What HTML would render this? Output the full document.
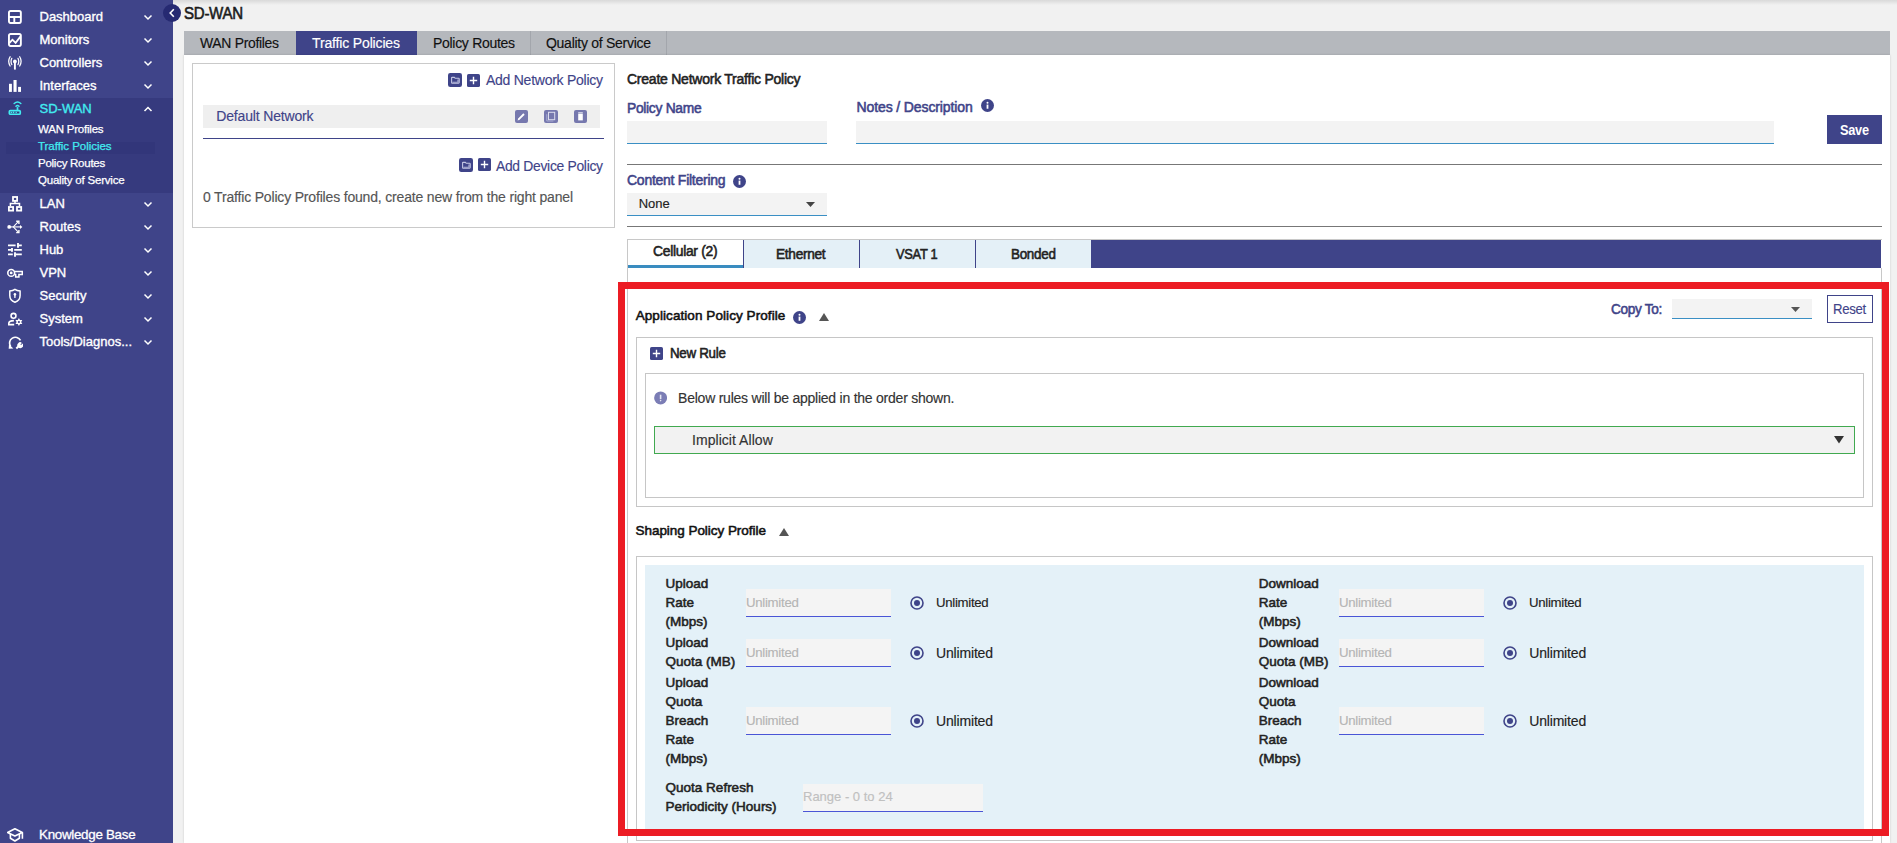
<!DOCTYPE html>
<html><head><meta charset="utf-8">
<style>
*{box-sizing:border-box;margin:0;padding:0}
html,body{width:1897px;height:843px;overflow:hidden;background:#f1f1f1;font-family:"Liberation Sans",sans-serif;color:#222;position:relative}
.a{position:absolute}
.t{position:absolute;white-space:nowrap}
</style></head><body>
<div class="a" style="left:0px;top:0px;width:173px;height:843px;background:#3f4489"></div>
<div class="a" style="left:0px;top:98px;width:173px;height:95px;background:#363a7e"></div>
<div class="a" style="left:6px;top:142px;width:149px;height:12px;background:#32367a"></div>
<div class="t" style="left:39.50px;top:10.20px;font-size:13px;line-height:13px;color:#fff;letter-spacing:0.000px;-webkit-text-stroke:0.35px currentColor;">Dashboard</div>
<svg class="a" style="left:143px;top:14px" width="10" height="7" viewBox="0 0 10 7"><path d="M1.5 1.5l3.5 3.5 3.5-3.5" fill="none" stroke="#fff" stroke-width="1.5"/></svg>
<div class="t" style="left:39.50px;top:33.20px;font-size:13px;line-height:13px;color:#fff;letter-spacing:0.000px;-webkit-text-stroke:0.35px currentColor;">Monitors</div>
<svg class="a" style="left:143px;top:37px" width="10" height="7" viewBox="0 0 10 7"><path d="M1.5 1.5l3.5 3.5 3.5-3.5" fill="none" stroke="#fff" stroke-width="1.5"/></svg>
<div class="t" style="left:39.50px;top:56.20px;font-size:13px;line-height:13px;color:#fff;letter-spacing:0.000px;-webkit-text-stroke:0.35px currentColor;">Controllers</div>
<svg class="a" style="left:143px;top:60px" width="10" height="7" viewBox="0 0 10 7"><path d="M1.5 1.5l3.5 3.5 3.5-3.5" fill="none" stroke="#fff" stroke-width="1.5"/></svg>
<div class="t" style="left:39.50px;top:79.20px;font-size:13px;line-height:13px;color:#fff;letter-spacing:0.000px;-webkit-text-stroke:0.35px currentColor;">Interfaces</div>
<svg class="a" style="left:143px;top:83px" width="10" height="7" viewBox="0 0 10 7"><path d="M1.5 1.5l3.5 3.5 3.5-3.5" fill="none" stroke="#fff" stroke-width="1.5"/></svg>
<div class="t" style="left:39.50px;top:102.20px;font-size:13px;line-height:13px;color:#42ecf0;letter-spacing:0.000px;-webkit-text-stroke:0.35px currentColor;">SD-WAN</div>
<svg class="a" style="left:143px;top:106px" width="10" height="7" viewBox="0 0 10 7"><path d="M1.5 5l3.5-3.5 3.5 3.5" fill="none" stroke="#fff" stroke-width="1.5"/></svg>
<div class="t" style="left:39.50px;top:197.30px;font-size:13px;line-height:13px;color:#fff;letter-spacing:0.000px;-webkit-text-stroke:0.35px currentColor;">LAN</div>
<svg class="a" style="left:143px;top:201px" width="10" height="7" viewBox="0 0 10 7"><path d="M1.5 1.5l3.5 3.5 3.5-3.5" fill="none" stroke="#fff" stroke-width="1.5"/></svg>
<div class="t" style="left:39.50px;top:220.30px;font-size:13px;line-height:13px;color:#fff;letter-spacing:0.000px;-webkit-text-stroke:0.35px currentColor;">Routes</div>
<svg class="a" style="left:143px;top:224px" width="10" height="7" viewBox="0 0 10 7"><path d="M1.5 1.5l3.5 3.5 3.5-3.5" fill="none" stroke="#fff" stroke-width="1.5"/></svg>
<div class="t" style="left:39.50px;top:243.30px;font-size:13px;line-height:13px;color:#fff;letter-spacing:0.000px;-webkit-text-stroke:0.35px currentColor;">Hub</div>
<svg class="a" style="left:143px;top:247px" width="10" height="7" viewBox="0 0 10 7"><path d="M1.5 1.5l3.5 3.5 3.5-3.5" fill="none" stroke="#fff" stroke-width="1.5"/></svg>
<div class="t" style="left:39.50px;top:266.30px;font-size:13px;line-height:13px;color:#fff;letter-spacing:0.000px;-webkit-text-stroke:0.35px currentColor;">VPN</div>
<svg class="a" style="left:143px;top:270px" width="10" height="7" viewBox="0 0 10 7"><path d="M1.5 1.5l3.5 3.5 3.5-3.5" fill="none" stroke="#fff" stroke-width="1.5"/></svg>
<div class="t" style="left:39.50px;top:289.30px;font-size:13px;line-height:13px;color:#fff;letter-spacing:0.000px;-webkit-text-stroke:0.35px currentColor;">Security</div>
<svg class="a" style="left:143px;top:293px" width="10" height="7" viewBox="0 0 10 7"><path d="M1.5 1.5l3.5 3.5 3.5-3.5" fill="none" stroke="#fff" stroke-width="1.5"/></svg>
<div class="t" style="left:39.50px;top:312.30px;font-size:13px;line-height:13px;color:#fff;letter-spacing:0.000px;-webkit-text-stroke:0.35px currentColor;">System</div>
<svg class="a" style="left:143px;top:316px" width="10" height="7" viewBox="0 0 10 7"><path d="M1.5 1.5l3.5 3.5 3.5-3.5" fill="none" stroke="#fff" stroke-width="1.5"/></svg>
<div class="t" style="left:39.50px;top:335.30px;font-size:13px;line-height:13px;color:#fff;letter-spacing:0.000px;-webkit-text-stroke:0.35px currentColor;">Tools/Diagnos...</div>
<svg class="a" style="left:143px;top:339px" width="10" height="7" viewBox="0 0 10 7"><path d="M1.5 1.5l3.5 3.5 3.5-3.5" fill="none" stroke="#fff" stroke-width="1.5"/></svg>
<svg class="a" style="left:7px;top:9px" width="16" height="16" viewBox="0 0 16 16"><g fill="none" stroke="#fff" stroke-width="1.9"><rect x="1.95" y="1.95" width="11.9" height="12" rx="1.6"/><path d="M2 8H13.9M7.3 8V14"/></g></svg>
<svg class="a" style="left:7px;top:32px" width="16" height="16" viewBox="0 0 16 16"><g fill="none" stroke="#fff" stroke-width="1.9"><rect x="1.95" y="1.95" width="11.9" height="12" rx="1.6"/><path d="M2.3 11l3.2-3.3 3.1 3.1 5-6.4" stroke-width="1.8"/></g></svg>
<svg class="a" style="left:7px;top:55px" width="16" height="16" viewBox="0 0 16 16"><g fill="none" stroke="#fff" stroke-width="1.25" stroke-linecap="round"><path d="M4.8 3.3Q3.3 6.4 4.8 9.6M3.1 1.7Q0.3 6.3 3.1 11M11 3.3Q12.5 6.4 11 9.6M12.7 1.7Q15.5 6.3 12.7 11"/><circle cx="7.9" cy="6.5" r="1.9" fill="#fff" stroke="none"/><path d="M7.9 7V14.6" stroke-width="1.9" stroke-linecap="butt"/></g></svg>
<svg class="a" style="left:7px;top:78px" width="16" height="16" viewBox="0 0 16 16"><g fill="#fff"><rect x="2" y="5.8" width="2.9" height="8.1"/><rect x="6.5" y="2" width="3.1" height="11.9"/><rect x="11.1" y="8.9" width="2.9" height="5"/></g></svg>
<svg class="a" style="left:7px;top:101px" width="16" height="16" viewBox="0 0 16 16"><g fill="none" stroke="#42ecf0" stroke-width="1.7"><rect x="2.35" y="9.55" width="10.9" height="3.7" rx="1"/><path d="M10.5 6.1V9"/><path d="M9 5.2Q10.5 3.6 12 5.2M7.2 2.5Q10.5 -0.4 13.8 2.5" stroke-width="1.5" stroke-linecap="round"/></g><g fill="#42ecf0"><circle cx="4.4" cy="11.4" r="0.75"/><circle cx="6.5" cy="11.4" r="0.8"/><circle cx="9.2" cy="11.4" r="0.75"/></g></svg>
<svg class="a" style="left:7px;top:196px" width="16" height="16" viewBox="0 0 16 16"><g fill="none" stroke="#fff" stroke-width="1.8"><rect x="6" y="1" width="4.1" height="3.9"/><rect x="1.9" y="11" width="4.2" height="3.6"/><rect x="10" y="11" width="4.2" height="3.6"/><path d="M8 4.9V7.6M3.4 10.1V7.6H12.5V10.1" stroke-width="1.5"/></g></svg>
<svg class="a" style="left:7px;top:219px" width="16" height="16" viewBox="0 0 16 16"><g fill="#fff" stroke="#fff"><circle cx="2.2" cy="7.9" r="1.9" stroke="none"/><path d="M2.2 7.9H13.6" stroke-width="1.3" fill="none" stroke-opacity="0.85"/><path d="M15.4 7.9L13 5.9V9.9z" stroke="none"/><path d="M6.3 7.9L11.3 2.7M6.3 7.9L11.3 13.1" stroke-width="1.1" fill="none"/><path d="M9.2 2.2H11.9V4.9M9.2 13.6H11.9V10.9" stroke-width="1.4" fill="none"/></g></svg>
<svg class="a" style="left:7px;top:242px" width="16" height="16" viewBox="0 0 16 16"><g fill="none" stroke="#fff" stroke-width="1.7"><path d="M1 3.4H8.6M12 3.4H14.8M1 7.9H4.1M7.2 7.9H14.8M1 12.4H5.8M8.9 12.4H14.8"/><path d="M11 1V5.8M5 6V9.8M8 10.3V14.8" stroke-width="1.9"/></g></svg>
<svg class="a" style="left:7px;top:265px" width="16" height="16" viewBox="0 0 16 16"><g fill="none" stroke="#fff" stroke-width="1.6"><circle cx="4.2" cy="7.9" r="3.4"/><path d="M7.6 6.4H15.3V9.5H11.9V12H8.7V9.5H7.4" stroke-width="1.5"/></g><circle cx="4.2" cy="7.9" r="1.4" fill="#fff"/></svg>
<svg class="a" style="left:7px;top:288px" width="16" height="16" viewBox="0 0 16 16"><g fill="none" stroke="#fff" stroke-width="1.5"><path d="M7.95 1.3C9.5 2.4 11.4 2.9 13.1 3.1V7.6C13.1 11 11 13.3 7.95 14.3C4.9 13.3 2.8 11 2.8 7.6V3.1C4.5 2.9 6.4 2.4 7.95 1.3z"/></g><g fill="#fff"><circle cx="7.9" cy="6.3" r="1.25"/><path d="M7.1 6.5H8.7L8.5 9.9H7.3z"/></g></svg>
<svg class="a" style="left:7px;top:311px" width="16" height="16" viewBox="0 0 16 16"><g fill="none" stroke="#fff" stroke-width="1.6"><circle cx="6.5" cy="4.8" r="2.45"/><path d="M7.2 13.6H1.8V12.3C1.8 10.8 3.6 9.8 6.9 9.6"/></g><path d="M11.9 7.1L13 9.1 15.3 9.1 14.2 11 15.3 12.9 13 12.9 11.9 14.9 10.8 12.9 8.5 12.9 9.6 11 8.5 9.1 10.8 9.1z" fill="#fff"/><circle cx="11.9" cy="11" r="1.1" fill="#3f4489"/></svg>
<svg class="a" style="left:7px;top:334px" width="16" height="16" viewBox="0 0 16 16"><g fill="none" stroke="#fff" stroke-width="1.7"><path d="M3.6 12.4A5.8 5.8 0 1 1 13.5 6.4"/></g><path d="M1.7 14.8L2 10.3 6.3 14.5z" fill="#fff"/><g fill="#fff"><path d="M8.6 13.8L11.6 10.8 13 12.2 10 15.2z"/><path d="M11.2 9.2A2.6 2.6 0 0 1 14.9 8.9L13.4 10.4 14.1 11.1 15.6 9.6A2.6 2.6 0 0 1 15.3 13.3 2.6 2.6 0 0 1 11.2 9.2z"/></g></svg>
<div class="t" style="left:38.00px;top:123.57px;font-size:11.5px;line-height:11.5px;color:#fff;letter-spacing:-0.213px;-webkit-text-stroke:0.25px currentColor;">WAN Profiles</div>
<div class="t" style="left:38.00px;top:140.57px;font-size:11.5px;line-height:11.5px;color:#42ecf0;letter-spacing:-0.035px;-webkit-text-stroke:0.25px currentColor;">Traffic Policies</div>
<div class="t" style="left:38.00px;top:157.57px;font-size:11.5px;line-height:11.5px;color:#fff;letter-spacing:-0.259px;-webkit-text-stroke:0.25px currentColor;">Policy Routes</div>
<div class="t" style="left:38.00px;top:174.57px;font-size:11.5px;line-height:11.5px;color:#fff;letter-spacing:-0.207px;-webkit-text-stroke:0.25px currentColor;">Quality of Service</div>
<div class="t" style="left:39.30px;top:827.87px;font-size:13.5px;line-height:13.5px;color:#fff;letter-spacing:-0.300px;-webkit-text-stroke:0.3px currentColor;transform:scaleX(0.9916);transform-origin:0 0;">Knowledge Base</div>
<svg class="a" style="left:7px;top:827px" width="17" height="16" viewBox="0 0 17 16"><g fill="none" stroke="#fff" stroke-width="1.6" stroke-linejoin="round"><path d="M0.6 5.5L7.9 1.8 15.3 5.5 7.9 8.9z"/><path d="M3.4 7.1V11.3L7.9 14 12.4 11.3V7.1M15.4 5.6V11.8"/></g></svg>
<div class="a" style="left:173px;top:0px;width:1724px;height:5px;background:linear-gradient(#d9d9d9,#f1f1f1)"></div>
<div class="a" style="left:163px;top:4px;width:18px;height:18px;border-radius:50%;background:#262a72"></div>
<svg class="a" style="left:168px;top:8px" width="8" height="10" viewBox="0 0 8 10"><path d="M5.8 1.2L2.2 5l3.6 3.8" fill="none" stroke="#fff" stroke-width="1.6"/></svg>
<div class="t" style="left:184.00px;top:5.11px;font-size:17px;line-height:17px;color:#1c1c1c;letter-spacing:-0.300px;-webkit-text-stroke:0.6px currentColor;transform:scaleX(0.8853);transform-origin:0 0;">SD-WAN</div>
<div class="a" style="left:184px;top:31px;width:1706px;height:24px;background:#b5b8bd"></div>
<div class="a" style="left:296px;top:31px;width:121px;height:24px;background:#3f4489"></div>
<div class="a" style="left:530px;top:31px;width:1px;height:24px;background:#a3a6ac"></div>
<div class="a" style="left:666px;top:31px;width:1px;height:24px;background:#a3a6ac"></div>
<div class="t" style="left:200.30px;top:36.15px;font-size:14px;line-height:14px;color:#111;letter-spacing:-0.300px;-webkit-text-stroke:0.15px currentColor;transform:scaleX(0.9948);transform-origin:0 0;">WAN Profiles</div>
<div class="t" style="left:312.00px;top:36.15px;font-size:14px;line-height:14px;color:#fff;letter-spacing:-0.150px;-webkit-text-stroke:0.15px currentColor;">Traffic Policies</div>
<div class="t" style="left:433.00px;top:36.15px;font-size:14px;line-height:14px;color:#111;letter-spacing:-0.300px;-webkit-text-stroke:0.15px currentColor;">Policy Routes</div>
<div class="t" style="left:546.00px;top:36.15px;font-size:14px;line-height:14px;color:#111;letter-spacing:-0.277px;-webkit-text-stroke:0.15px currentColor;">Quality of Service</div>
<div class="a" style="left:184px;top:55px;width:1706px;height:788px;background:#fff;box-shadow:0 0 2px rgba(0,0,0,0.16)"></div>
<div class="a" style="left:192px;top:63px;width:423px;height:165px;border:1px solid #cacaca"></div>
<svg class="a" style="left:448px;top:73px" width="14" height="14" viewBox="0 0 14 14"><rect width="14" height="14" rx="2.2" fill="#3f4489"/><g transform="translate(0,-0.7)"><path d="M3.6 4.9V10.4Q3.6 10.9 4.1 10.9H10.6Q11.2 10.9 11.2 10.3V6.6Q11.2 6 10.6 6H7.2L6.4 5.1H4.1Q3.6 5.1 3.6 5.6" fill="none" stroke="#c3c5e2" stroke-width="1.1"/><path d="M9.4 7.1H10.7V10.4H4.4V9.4H9.4z" fill="#aeb1d6"/></g></svg>
<svg class="a" style="left:467px;top:74px" width="13" height="13" viewBox="0 0 13 13"><rect width="13" height="13" rx="1.6" fill="#3f4489"/><path d="M6.5 2.8v7.4M2.8 6.5h7.4" stroke="#fff" stroke-width="1.4"/></svg>
<div class="t" style="left:486.00px;top:72.85px;font-size:14px;line-height:14px;color:#3f4489;letter-spacing:-0.258px;-webkit-text-stroke:0.15px currentColor;">Add Network Policy</div>
<div class="a" style="left:203px;top:105px;width:397px;height:23px;background:#efefef"></div>
<div class="t" style="left:216.30px;top:108.65px;font-size:14px;line-height:14px;color:#3f4489;letter-spacing:-0.166px;-webkit-text-stroke:0.15px currentColor;">Default Network</div>
<svg class="a" style="left:515px;top:110px" width="13" height="13" viewBox="0 0 13 13"><rect width="13" height="13" rx="2" fill="#7678ae"/><path d="M3.6 9.4l5.4-5.4" stroke="#fff" stroke-width="1.9"/><path d="M2.6 10.4l.6-2 1.4 1.4z" fill="#fff"/></svg>
<svg class="a" style="left:544px;top:110px" width="14" height="13" viewBox="0 0 14 13"><rect width="14" height="13" rx="2" fill="#7678ae"/><rect x="4.5" y="2.3" width="6.2" height="7.4" fill="none" stroke="#dcdded" stroke-width="1"/><path d="M2.8 4.2v6.8h6.6" fill="none" stroke="#a9abd2" stroke-width="1"/></svg>
<svg class="a" style="left:574px;top:110px" width="13" height="13" viewBox="0 0 13 13"><rect width="13" height="13" rx="2" fill="#7678ae"/><rect x="4.2" y="3.6" width="4.6" height="6.8" fill="#fff"/><rect x="4.2" y="2.2" width="4.6" height="1" fill="#dfe0ee"/></svg>
<div class="a" style="left:203px;top:138px;width:401px;height:1px;background:#3f4489"></div>
<svg class="a" style="left:459px;top:158px" width="14" height="14" viewBox="0 0 14 14"><rect width="14" height="14" rx="2.2" fill="#3f4489"/><g transform="translate(0,-0.7)"><path d="M3.6 4.9V10.4Q3.6 10.9 4.1 10.9H10.6Q11.2 10.9 11.2 10.3V6.6Q11.2 6 10.6 6H7.2L6.4 5.1H4.1Q3.6 5.1 3.6 5.6" fill="none" stroke="#c3c5e2" stroke-width="1.1"/><path d="M9.4 7.1H10.7V10.4H4.4V9.4H9.4z" fill="#aeb1d6"/></g></svg>
<svg class="a" style="left:478px;top:158px" width="13" height="13" viewBox="0 0 13 13"><rect width="13" height="13" rx="1.6" fill="#3f4489"/><path d="M6.5 2.8v7.4M2.8 6.5h7.4" stroke="#fff" stroke-width="1.4"/></svg>
<div class="t" style="left:496.00px;top:158.95px;font-size:14px;line-height:14px;color:#3f4489;letter-spacing:-0.300px;-webkit-text-stroke:0.15px currentColor;transform:scaleX(0.9905);transform-origin:0 0;">Add Device Policy</div>
<div class="t" style="left:203.00px;top:190.25px;font-size:14px;line-height:14px;color:#555;letter-spacing:-0.175px;-webkit-text-stroke:0.15px currentColor;">0 Traffic Policy Profiles found, create new from the right panel</div>
<div class="t" style="left:627.00px;top:71.95px;font-size:14px;line-height:14px;color:#222;letter-spacing:-0.238px;-webkit-text-stroke:0.55px currentColor;">Create Network Traffic Policy</div>
<div class="t" style="left:627.00px;top:100.95px;font-size:14px;line-height:14px;color:#3f4489;letter-spacing:-0.300px;-webkit-text-stroke:0.55px currentColor;transform:scaleX(0.9871);transform-origin:0 0;">Policy Name</div>
<div class="t" style="left:856.60px;top:100.45px;font-size:14px;line-height:14px;color:#3f4489;letter-spacing:-0.121px;-webkit-text-stroke:0.55px currentColor;">Notes / Description</div>
<svg class="a" style="left:981px;top:99px" width="13" height="13" viewBox="0 0 13 13"><circle cx="6.5" cy="6.5" r="6.5" fill="#3f4489"/><rect x="5.6" y="5.59" width="1.8" height="4.16" fill="#fff"/><circle cx="6.5" cy="3.6400000000000006" r="1" fill="#fff"/></svg>
<div class="a" style="left:627px;top:121px;width:200px;height:23px;background:#f3f3f3;border-bottom:1px solid #3a8fc4"></div>
<div class="a" style="left:856px;top:121px;width:918px;height:23px;background:#f3f3f3;border-bottom:1px solid #3a8fc4"></div>
<div class="a" style="left:1827px;top:115px;width:55px;height:29px;background:#3f4489"></div>
<div class="t" style="left:1840.00px;top:123.05px;font-size:14px;line-height:14px;color:#fff;letter-spacing:-0.300px;font-weight:bold;transform:scaleX(0.9122);transform-origin:0 0;">Save</div>
<div class="a" style="left:627px;top:164px;width:1255px;height:1px;background:#777"></div>
<div class="t" style="left:627.00px;top:172.85px;font-size:14px;line-height:14px;color:#3f4489;letter-spacing:-0.257px;-webkit-text-stroke:0.55px currentColor;">Content Filtering</div>
<svg class="a" style="left:733px;top:175px" width="13" height="13" viewBox="0 0 13 13"><circle cx="6.5" cy="6.5" r="6.5" fill="#3f4489"/><rect x="5.6" y="5.59" width="1.8" height="4.16" fill="#fff"/><circle cx="6.5" cy="3.6400000000000006" r="1" fill="#fff"/></svg>
<div class="a" style="left:627px;top:193px;width:200px;height:23px;background:#f3f3f3;border-bottom:1px solid #3a8fc4"></div>
<div class="t" style="left:638.70px;top:196.80px;font-size:13px;line-height:13px;color:#222;letter-spacing:0.000px;-webkit-text-stroke:0.15px currentColor;">None</div>
<svg class="a" style="left:806px;top:202px" width="9" height="6" viewBox="0 0 9 6"><path d="M0 0h9L4.5 5z" fill="#444"/></svg>
<div class="a" style="left:627px;top:226px;width:1255px;height:1px;background:#777"></div>
<div class="a" style="left:627px;top:239px;width:1255px;height:1px;background:#c8c8c8"></div>
<div class="a" style="left:627px;top:239px;width:1px;height:604px;background:#c8c8c8"></div>
<div class="a" style="left:1881px;top:268px;width:1px;height:575px;background:#c8c8c8"></div>
<div class="a" style="left:628px;top:240px;width:116px;height:28px;background:#fff"></div>
<div class="a" style="left:628px;top:265px;width:116px;height:3px;background:#3a8cc0"></div>
<div class="a" style="left:744px;top:240px;width:115px;height:28px;background:#e4f0f7"></div>
<div class="a" style="left:860px;top:240px;width:115px;height:28px;background:#e4f0f7"></div>
<div class="a" style="left:976px;top:240px;width:115px;height:28px;background:#e4f0f7"></div>
<div class="a" style="left:743px;top:240px;width:1px;height:28px;background:#3f4489"></div>
<div class="a" style="left:859px;top:240px;width:1px;height:28px;background:#3f4489"></div>
<div class="a" style="left:975px;top:240px;width:1px;height:28px;background:#3f4489"></div>
<div class="a" style="left:1091px;top:240px;width:790px;height:28px;background:#3f4489"></div>
<div class="t" style="left:652.60px;top:244.05px;font-size:14px;line-height:14px;color:#222;letter-spacing:-0.300px;-webkit-text-stroke:0.55px currentColor;transform:scaleX(0.9915);transform-origin:0 0;">Cellular (2)</div>
<div class="t" style="left:776.40px;top:246.65px;font-size:14px;line-height:14px;color:#222;letter-spacing:-0.300px;-webkit-text-stroke:0.55px currentColor;transform:scaleX(0.9762);transform-origin:0 0;">Ethernet</div>
<div class="t" style="left:896.00px;top:246.75px;font-size:14px;line-height:14px;color:#222;letter-spacing:-0.300px;-webkit-text-stroke:0.55px currentColor;transform:scaleX(0.9159);transform-origin:0 0;">VSAT 1</div>
<div class="t" style="left:1010.70px;top:246.75px;font-size:14px;line-height:14px;color:#222;letter-spacing:-0.300px;-webkit-text-stroke:0.55px currentColor;transform:scaleX(0.9603);transform-origin:0 0;">Bonded</div>
<div class="t" style="left:635.70px;top:308.57px;font-size:13.5px;line-height:13.5px;color:#111;letter-spacing:0.071px;-webkit-text-stroke:0.55px currentColor;">Application Policy Profile</div>
<svg class="a" style="left:793px;top:311px" width="13" height="13" viewBox="0 0 13 13"><circle cx="6.5" cy="6.5" r="6.5" fill="#3f4489"/><rect x="5.6" y="5.59" width="1.8" height="4.16" fill="#fff"/><circle cx="6.5" cy="3.6400000000000006" r="1" fill="#fff"/></svg>
<svg class="a" style="left:819px;top:313px" width="10" height="8" viewBox="0 0 10 8"><path d="M5 0L10 8H0z" fill="#555"/></svg>
<div class="t" style="left:1611.00px;top:302.45px;font-size:14px;line-height:14px;color:#3f4489;letter-spacing:-0.300px;-webkit-text-stroke:0.55px currentColor;transform:scaleX(0.9701);transform-origin:0 0;">Copy To:</div>
<div class="a" style="left:1672px;top:299px;width:140px;height:20px;background:#f3f3f3;border-bottom:1px solid #3a8fc4"></div>
<svg class="a" style="left:1791px;top:307px" width="9" height="6" viewBox="0 0 9 6"><path d="M0 0h9L4.5 5z" fill="#555"/></svg>
<div class="a" style="left:1827px;top:295px;width:46px;height:28px;border:1px solid #3f4489"></div>
<div class="t" style="left:1833.40px;top:302.15px;font-size:14px;line-height:14px;color:#3f4489;letter-spacing:-0.300px;-webkit-text-stroke:0.15px currentColor;transform:scaleX(0.9387);transform-origin:0 0;">Reset</div>
<div class="a" style="left:636px;top:337px;width:1237px;height:170px;border:1px solid #c6c6c6"></div>
<svg class="a" style="left:650px;top:347px" width="13" height="13" viewBox="0 0 13 13"><rect width="13" height="13" rx="1.6" fill="#3f4489"/><path d="M6.5 2.8v7.4M2.8 6.5h7.4" stroke="#fff" stroke-width="1.4"/></svg>
<div class="t" style="left:670.00px;top:346.45px;font-size:14px;line-height:14px;color:#222;letter-spacing:-0.300px;-webkit-text-stroke:0.55px currentColor;transform:scaleX(0.9527);transform-origin:0 0;">New Rule</div>
<div class="a" style="left:645px;top:373px;width:1219px;height:125px;border:1px solid #c6c6c6"></div>
<svg class="a" style="left:654px;top:391px" width="13" height="14" viewBox="0 0 13 14"><circle cx="6.6" cy="6.9" r="6.5" fill="#7b7db5"/><rect x="5.8" y="3.7" width="1.6" height="4.4" fill="#fff" opacity="0.8"/><circle cx="6.6" cy="9.6" r="0.8" fill="#fff" opacity="0.8"/></svg>
<div class="t" style="left:678.10px;top:390.85px;font-size:14px;line-height:14px;color:#333;letter-spacing:-0.236px;-webkit-text-stroke:0.15px currentColor;">Below rules will be applied in the order shown.</div>
<div class="a" style="left:654px;top:426px;width:1201px;height:28px;background:#f2f2f2;border:1px solid #41a950"></div>
<div class="t" style="left:692.00px;top:433.05px;font-size:14px;line-height:14px;color:#333;letter-spacing:0.048px;-webkit-text-stroke:0.15px currentColor;">Implicit Allow</div>
<svg class="a" style="left:1834px;top:436px" width="10" height="8" viewBox="0 0 10 8"><path d="M0 0h10L5 7.5z" fill="#333"/></svg>
<div class="t" style="left:635.50px;top:523.97px;font-size:13.5px;line-height:13.5px;color:#111;letter-spacing:-0.044px;-webkit-text-stroke:0.55px currentColor;">Shaping Policy Profile</div>
<svg class="a" style="left:779px;top:528px" width="10" height="8" viewBox="0 0 10 8"><path d="M5 0L10 8H0z" fill="#555"/></svg>
<div class="a" style="left:636px;top:556px;width:1237px;height:285px;border:1px solid #c6c6c6"></div>
<div class="a" style="left:645px;top:565px;width:1219px;height:268px;background:#e4f1f8"></div>
<div class="t" style="left:665.60px;top:577.47px;font-size:13.5px;line-height:13.5px;color:#222;letter-spacing:0.000px;-webkit-text-stroke:0.55px currentColor;">Upload</div>
<div class="t" style="left:665.60px;top:596.47px;font-size:13.5px;line-height:13.5px;color:#222;letter-spacing:0.000px;-webkit-text-stroke:0.55px currentColor;">Rate</div>
<div class="t" style="left:665.60px;top:615.47px;font-size:13.5px;line-height:13.5px;color:#222;letter-spacing:0.000px;-webkit-text-stroke:0.55px currentColor;">(Mbps)</div>
<div class="a" style="left:746px;top:589px;width:145px;height:28px;background:#f4f4f4;border-bottom:1px solid #4a55d6"></div>
<div class="t" style="left:746.00px;top:596.27px;font-size:13.5px;line-height:13.5px;color:#b5b5b5;letter-spacing:-0.300px;-webkit-text-stroke:0.15px currentColor;transform:scaleX(0.9802);transform-origin:0 0;">Unlimited</div>
<svg class="a" style="left:910px;top:596px" width="14" height="14" viewBox="0 0 14 14"><circle cx="7" cy="7" r="6" fill="none" stroke="#3f4489" stroke-width="1.6"/><circle cx="7" cy="7" r="3" fill="#3f4489"/></svg>
<div class="t" style="left:936.00px;top:596.07px;font-size:13.5px;line-height:13.5px;color:#222;letter-spacing:-0.300px;-webkit-text-stroke:0.15px currentColor;transform:scaleX(0.9783);transform-origin:0 0;">Unlimited</div>
<div class="t" style="left:665.60px;top:636.27px;font-size:13.5px;line-height:13.5px;color:#222;letter-spacing:0.000px;-webkit-text-stroke:0.55px currentColor;">Upload</div>
<div class="t" style="left:665.60px;top:655.27px;font-size:13.5px;line-height:13.5px;color:#222;letter-spacing:0.000px;-webkit-text-stroke:0.55px currentColor;">Quota (MB)</div>
<div class="a" style="left:746px;top:639px;width:145px;height:28px;background:#f4f4f4;border-bottom:1px solid #4a55d6"></div>
<div class="t" style="left:746.00px;top:645.77px;font-size:13.5px;line-height:13.5px;color:#b5b5b5;letter-spacing:-0.300px;-webkit-text-stroke:0.15px currentColor;transform:scaleX(0.9802);transform-origin:0 0;">Unlimited</div>
<svg class="a" style="left:910px;top:646px" width="14" height="14" viewBox="0 0 14 14"><circle cx="7" cy="7" r="6" fill="none" stroke="#3f4489" stroke-width="1.6"/><circle cx="7" cy="7" r="3" fill="#3f4489"/></svg>
<div class="t" style="left:936.00px;top:646.05px;font-size:14px;line-height:14px;color:#222;letter-spacing:-0.169px;-webkit-text-stroke:0.15px currentColor;">Unlimited</div>
<div class="t" style="left:665.60px;top:676.17px;font-size:13.5px;line-height:13.5px;color:#222;letter-spacing:0.000px;-webkit-text-stroke:0.55px currentColor;">Upload</div>
<div class="t" style="left:665.60px;top:695.07px;font-size:13.5px;line-height:13.5px;color:#222;letter-spacing:0.000px;-webkit-text-stroke:0.55px currentColor;">Quota</div>
<div class="t" style="left:665.60px;top:714.07px;font-size:13.5px;line-height:13.5px;color:#222;letter-spacing:0.000px;-webkit-text-stroke:0.55px currentColor;">Breach</div>
<div class="t" style="left:665.60px;top:733.07px;font-size:13.5px;line-height:13.5px;color:#222;letter-spacing:0.000px;-webkit-text-stroke:0.55px currentColor;">Rate</div>
<div class="t" style="left:665.60px;top:752.07px;font-size:13.5px;line-height:13.5px;color:#222;letter-spacing:0.000px;-webkit-text-stroke:0.55px currentColor;">(Mbps)</div>
<div class="a" style="left:746px;top:707px;width:145px;height:28px;background:#f4f4f4;border-bottom:1px solid #4a55d6"></div>
<div class="t" style="left:746.00px;top:714.07px;font-size:13.5px;line-height:13.5px;color:#b5b5b5;letter-spacing:-0.300px;-webkit-text-stroke:0.15px currentColor;transform:scaleX(0.9802);transform-origin:0 0;">Unlimited</div>
<svg class="a" style="left:910px;top:714px" width="14" height="14" viewBox="0 0 14 14"><circle cx="7" cy="7" r="6" fill="none" stroke="#3f4489" stroke-width="1.6"/><circle cx="7" cy="7" r="3" fill="#3f4489"/></svg>
<div class="t" style="left:936.00px;top:714.35px;font-size:14px;line-height:14px;color:#222;letter-spacing:-0.169px;-webkit-text-stroke:0.15px currentColor;">Unlimited</div>
<div class="t" style="left:1258.80px;top:577.47px;font-size:13.5px;line-height:13.5px;color:#222;letter-spacing:0.000px;-webkit-text-stroke:0.55px currentColor;">Download</div>
<div class="t" style="left:1258.80px;top:596.47px;font-size:13.5px;line-height:13.5px;color:#222;letter-spacing:0.000px;-webkit-text-stroke:0.55px currentColor;">Rate</div>
<div class="t" style="left:1258.80px;top:615.47px;font-size:13.5px;line-height:13.5px;color:#222;letter-spacing:0.000px;-webkit-text-stroke:0.55px currentColor;">(Mbps)</div>
<div class="a" style="left:1339px;top:589px;width:145px;height:28px;background:#f4f4f4;border-bottom:1px solid #4a55d6"></div>
<div class="t" style="left:1339.00px;top:596.27px;font-size:13.5px;line-height:13.5px;color:#b5b5b5;letter-spacing:-0.300px;-webkit-text-stroke:0.15px currentColor;transform:scaleX(0.9802);transform-origin:0 0;">Unlimited</div>
<svg class="a" style="left:1503px;top:596px" width="14" height="14" viewBox="0 0 14 14"><circle cx="7" cy="7" r="6" fill="none" stroke="#3f4489" stroke-width="1.6"/><circle cx="7" cy="7" r="3" fill="#3f4489"/></svg>
<div class="t" style="left:1529.20px;top:596.07px;font-size:13.5px;line-height:13.5px;color:#222;letter-spacing:-0.300px;-webkit-text-stroke:0.15px currentColor;transform:scaleX(0.9783);transform-origin:0 0;">Unlimited</div>
<div class="t" style="left:1258.80px;top:636.27px;font-size:13.5px;line-height:13.5px;color:#222;letter-spacing:0.000px;-webkit-text-stroke:0.55px currentColor;">Download</div>
<div class="t" style="left:1258.80px;top:655.27px;font-size:13.5px;line-height:13.5px;color:#222;letter-spacing:0.000px;-webkit-text-stroke:0.55px currentColor;">Quota (MB)</div>
<div class="a" style="left:1339px;top:639px;width:145px;height:28px;background:#f4f4f4;border-bottom:1px solid #4a55d6"></div>
<div class="t" style="left:1339.00px;top:645.77px;font-size:13.5px;line-height:13.5px;color:#b5b5b5;letter-spacing:-0.300px;-webkit-text-stroke:0.15px currentColor;transform:scaleX(0.9802);transform-origin:0 0;">Unlimited</div>
<svg class="a" style="left:1503px;top:646px" width="14" height="14" viewBox="0 0 14 14"><circle cx="7" cy="7" r="6" fill="none" stroke="#3f4489" stroke-width="1.6"/><circle cx="7" cy="7" r="3" fill="#3f4489"/></svg>
<div class="t" style="left:1529.20px;top:646.05px;font-size:14px;line-height:14px;color:#222;letter-spacing:-0.169px;-webkit-text-stroke:0.15px currentColor;">Unlimited</div>
<div class="t" style="left:1258.80px;top:676.17px;font-size:13.5px;line-height:13.5px;color:#222;letter-spacing:0.000px;-webkit-text-stroke:0.55px currentColor;">Download</div>
<div class="t" style="left:1258.80px;top:695.07px;font-size:13.5px;line-height:13.5px;color:#222;letter-spacing:0.000px;-webkit-text-stroke:0.55px currentColor;">Quota</div>
<div class="t" style="left:1258.80px;top:714.07px;font-size:13.5px;line-height:13.5px;color:#222;letter-spacing:0.000px;-webkit-text-stroke:0.55px currentColor;">Breach</div>
<div class="t" style="left:1258.80px;top:733.07px;font-size:13.5px;line-height:13.5px;color:#222;letter-spacing:0.000px;-webkit-text-stroke:0.55px currentColor;">Rate</div>
<div class="t" style="left:1258.80px;top:752.07px;font-size:13.5px;line-height:13.5px;color:#222;letter-spacing:0.000px;-webkit-text-stroke:0.55px currentColor;">(Mbps)</div>
<div class="a" style="left:1339px;top:707px;width:145px;height:28px;background:#f4f4f4;border-bottom:1px solid #4a55d6"></div>
<div class="t" style="left:1339.00px;top:714.07px;font-size:13.5px;line-height:13.5px;color:#b5b5b5;letter-spacing:-0.300px;-webkit-text-stroke:0.15px currentColor;transform:scaleX(0.9802);transform-origin:0 0;">Unlimited</div>
<svg class="a" style="left:1503px;top:714px" width="14" height="14" viewBox="0 0 14 14"><circle cx="7" cy="7" r="6" fill="none" stroke="#3f4489" stroke-width="1.6"/><circle cx="7" cy="7" r="3" fill="#3f4489"/></svg>
<div class="t" style="left:1529.20px;top:714.35px;font-size:14px;line-height:14px;color:#222;letter-spacing:-0.169px;-webkit-text-stroke:0.15px currentColor;">Unlimited</div>
<div class="t" style="left:665.60px;top:781.47px;font-size:13.5px;line-height:13.5px;color:#222;letter-spacing:0.000px;-webkit-text-stroke:0.55px currentColor;">Quota Refresh</div>
<div class="t" style="left:665.60px;top:800.47px;font-size:13.5px;line-height:13.5px;color:#222;letter-spacing:0.000px;-webkit-text-stroke:0.55px currentColor;">Periodicity (Hours)</div>
<div class="a" style="left:803px;top:784px;width:180px;height:28px;background:#f4f4f4;border-bottom:1px solid #4a55d6"></div>
<div class="t" style="left:803.00px;top:789.80px;font-size:13px;line-height:13px;color:#c0c0c0;letter-spacing:0.000px;-webkit-text-stroke:0.15px currentColor;">Range - 0 to 24</div>
<div class="a" style="left:618px;top:282px;width:1271px;height:554px;border:7px solid #ec1c24"></div>
</body></html>
